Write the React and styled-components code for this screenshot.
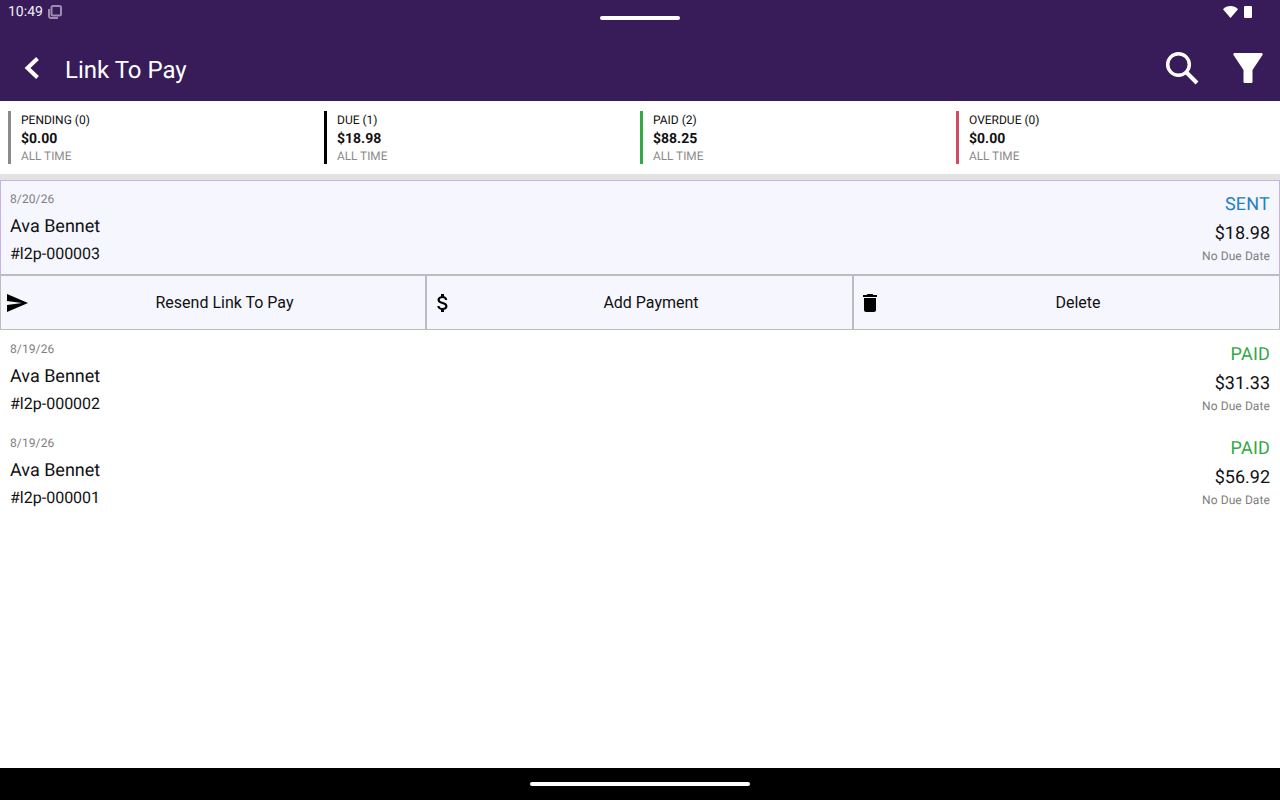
import React from "react"
import styled, { createGlobalStyle } from "styled-components"
import { MdSend, MdAttachMoney, MdDelete } from "react-icons/md"

const GlobalStyle = createGlobalStyle`
  html, body {
    margin: 0;
    padding: 0;
    background: #fff;
  }
  * {
    box-sizing: border-box;
  }
`

const Screen = styled.div`
  position: relative;
  width: 1280px;
  height: 800px;
  overflow: hidden;
  display: flex;
  flex-direction: column;
  background: #fff;
  font-family: Roboto, "Liberation Sans", sans-serif;
  text-rendering: geometricPrecision;
  color: #111;
`

const Header = styled.header`
  height: 101px;
  flex: none;
  background: #371c59;
  color: #fff;
  display: flex;
  flex-direction: column;
`

const StatusBar = styled.div`
  height: 24px;
  flex: none;
  padding: 0 28px 0 8px;
  display: flex;
  align-items: center;
  justify-content: space-between;
  font-size: 14px;
  color: #f1edf5;
`

const StatusGroup = styled.div`
  display: flex;
  align-items: center;
  gap: ${(p) => p.gap}px;
`

const Pill = styled.div`
  position: absolute;
  left: 600px;
  top: 16px;
  width: 80px;
  height: 4px;
  border-radius: 2px;
  background: #fff;
`

const Toolbar = styled.div`
  flex: 1;
  display: flex;
  align-items: center;
  padding: 13px 16px 0 22px;
`

const BackIcon = styled.svg`
  margin-bottom: 2px;
`

const Title = styled.h1`
  margin: 2px 0 0 23px;
  flex: 1;
  font-size: 24px;
  font-weight: 400;
`

const ToolIcons = styled.div`
  display: flex;
  align-items: center;
  gap: 32px;
  margin-bottom: 2px;
`

const Summary = styled.section`
  height: 73px;
  flex: none;
  padding: 10px 0 0 8px;
  display: grid;
  grid-template-columns: repeat(4, 316px);
`

const Stat = styled.div`
  height: 53px;
  border-left: 3px solid ${(p) => p.color};
  padding-left: 10px;
  display: flex;
  flex-direction: column;
  font-size: 12px;
  line-height: 18px;
`

const StatAmount = styled.div`
  margin: 1px 0 -1px;
  font-size: 14px;
  font-weight: 700;
`

const StatRange = styled.div`
  font-size: 11.8px;
  color: #8a8a8a;
`

const Divider = styled.div`
  height: 6px;
  flex: none;
  background: #e2e2e2;
`

const Row = styled.div`
  height: 94px;
  flex: none;
  display: flex;
  justify-content: space-between;
  padding: ${(p) => (p.selected ? "10px 9px 0" : "11px 10px 0")};
  background: ${(p) => (p.selected ? "#f5f6fe" : "#fff")};
  border: ${(p) => (p.selected ? "1px solid #c9b3e3" : "none")};
  border-bottom: none;
`

const RowLeft = styled.div`
  display: flex;
  flex-direction: column;
`

const RowRight = styled.div`
  display: flex;
  flex-direction: column;
  align-items: flex-end;
`

const DateText = styled.div`
  font-size: 12px;
  line-height: 16px;
  letter-spacing: 0.1px;
  color: #808080;
`

const Name = styled.div`
  margin-top: 9px;
  font-size: 18px;
  line-height: 22px;
`

const Reference = styled.div`
  margin-top: 6px;
  font-size: 16px;
  line-height: 20px;
`

const Status = styled.div`
  margin-top: 2px;
  font-size: 18px;
  line-height: 24px;
  letter-spacing: 0.2px;
  color: ${(p) => p.color};
`

const Amount = styled.div`
  margin-top: 5px;
  font-size: 18px;
  line-height: 24px;
`

const Due = styled.div`
  margin-top: 2px;
  font-size: 12px;
  line-height: 16px;
  letter-spacing: 0.1px;
  color: #808080;
`

const Actions = styled.div`
  height: 56px;
  flex: none;
  display: grid;
  grid-template-columns: 425px 427px 428px;
  background: #f5f6fe;
  border-top: 2px solid #bdbdbd;
  border-bottom: 1px solid #bdbdbd;
`

const ActionButton = styled.button`
  padding: 0 5px 0 4px;
  border: 0;
  border-left: 2px solid #bdbdbd;
  background: transparent;
  font: inherit;
  font-size: 16px;
  color: #111;
  display: flex;
  align-items: center;

  &:first-child {
    border-left-width: 1px;
  }

  &:last-child {
    border-right: 1px solid #bdbdbd;
  }

  svg {
    flex: none;
    color: #000;
  }
`

const ActionLabel = styled.span`
  flex: 1;
  text-align: center;
`

const Body = styled.div`
  flex: 1;
`

const NavBar = styled.div`
  height: 32px;
  flex: none;
  background: #000;
  display: flex;
  align-items: center;
  justify-content: center;
`

const NavHandle = styled.div`
  width: 220px;
  height: 4px;
  border-radius: 2px;
  background: #fff;
`

const stats = [
  { label: "PENDING (0)", amount: "$0.00", color: "#8a8a8a" },
  { label: "DUE (1)", amount: "$18.98", color: "#000" },
  { label: "PAID (2)", amount: "$88.25", color: "#33a845" },
  { label: "OVERDUE (0)", amount: "$0.00", color: "#d14c5f" },
]

const rows = [
  { date: "8/19/26", ref: "#l2p-000002", amount: "$31.33" },
  { date: "8/19/26", ref: "#l2p-000001", amount: "$56.92" },
]

const LinkRow = ({ date, reference, amount, status, statusColor, selected }) => (
  <Row selected={selected}>
    <RowLeft>
      <DateText>{date}</DateText>
      <Name>Ava Bennet</Name>
      <Reference>{reference}</Reference>
    </RowLeft>
    <RowRight>
      <Status color={statusColor}>{status}</Status>
      <Amount>{amount}</Amount>
      <Due>No Due Date</Due>
    </RowRight>
  </Row>
)

export default function App() {
  return (
    <Screen>
      <GlobalStyle />
      <Header>
        <StatusBar>
          <StatusGroup gap={4}>
            10:49
            <svg width="16" height="16" viewBox="0 0 16 16" fill="none" stroke="#9d8cb0" strokeWidth="2">
              <rect x="4.5" y="2" width="9.5" height="9.5" rx="1.5" />
              <path d="M2 5v7a2 2 0 0 0 2 2h7" />
            </svg>
          </StatusGroup>
          <StatusGroup gap={6}>
            <svg width="15" height="12" viewBox="0 0 15 12" fill="#fff">
              <path d="M0 3.2C2 1.2 4.6 0 7.5 0s5.5 1.2 7.5 3.2L7.5 12z" />
            </svg>
            <svg width="8" height="12" viewBox="0 0 8 12" fill="#fff">
              <rect x="0" y="0" width="8" height="12" rx="1" />
            </svg>
          </StatusGroup>
        </StatusBar>
        <Pill />
        <Toolbar>
          <BackIcon width="20" height="24" viewBox="0 0 20 24" fill="none" stroke="#fff" strokeWidth="4">
            <path d="M15.5 2.5L5.5 12l10 9.5" />
          </BackIcon>
          <Title>Link To Pay</Title>
          <ToolIcons>
            <svg width="36" height="36" viewBox="0 0 36 36" fill="none" stroke="#fff" strokeWidth="3.5">
              <circle cx="14.5" cy="14.5" r="10.8" />
              <path d="M22.5 22.5L33 33" strokeWidth="4" />
            </svg>
            <svg width="32" height="32" viewBox="0 0 32 32" fill="#fff">
              <path d="M1.5 3C1 2 1.5 1 2.5 1h27c1 0 1.500 1 1 2L20.500 18v11.500c0 1-.5 1.500-1.500 1.500h-6c-1 0-1.500-.5-1.500-1.500V18z" />
            </svg>
          </ToolIcons>
        </Toolbar>
      </Header>

      <Summary>
        {stats.map((s) => (
          <Stat key={s.label} color={s.color}>
            <div>{s.label}</div>
            <StatAmount>{s.amount}</StatAmount>
            <StatRange>ALL TIME</StatRange>
          </Stat>
        ))}
      </Summary>
      <Divider />

      <LinkRow
        selected
        date="8/20/26"
        reference="#l2p-000003"
        amount="$18.98"
        status="SENT"
        statusColor="#2480c6"
      />
      <Actions>
        <ActionButton>
          <MdSend size={24} />
          <ActionLabel>Resend Link To Pay</ActionLabel>
        </ActionButton>
        <ActionButton>
          <MdAttachMoney size={24} />
          <ActionLabel>Add Payment</ActionLabel>
        </ActionButton>
        <ActionButton>
          <MdDelete size={24} />
          <ActionLabel>Delete</ActionLabel>
        </ActionButton>
      </Actions>

      {rows.map((r) => (
        <LinkRow
          key={r.ref}
          date={r.date}
          reference={r.ref}
          amount={r.amount}
          status="PAID"
          statusColor="#33a845"
        />
      ))}

      <Body />
      <NavBar>
        <NavHandle />
      </NavBar>
    </Screen>
  )
}
